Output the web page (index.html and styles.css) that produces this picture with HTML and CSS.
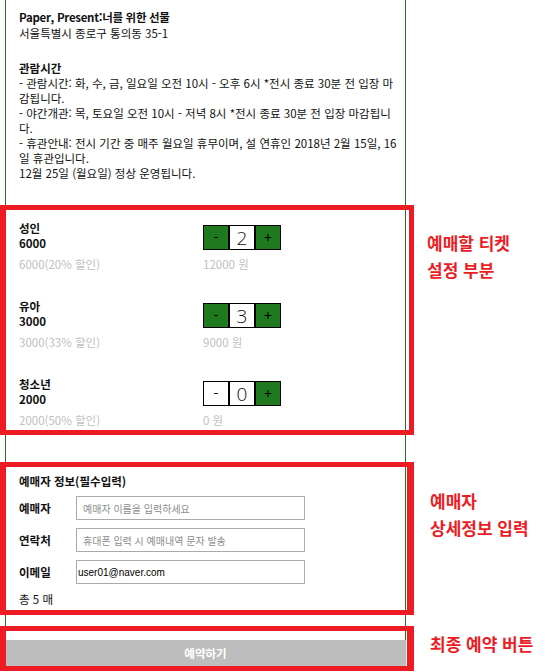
FILE: index.html
```html
<!DOCTYPE html>
<html lang="ko">
<head>
<meta charset="utf-8">
<title>Paper, Present 예매</title>
<link rel="stylesheet" href="styles.css">
</head>
<body>
<div class="page">
  <section class="info">
    <p class="info-title">Paper, Present:너를 위한 선물</p>
    <p class="info-line">서울특별시 종로구 통의동 35-1</p>
    <div class="hours">
      <p class="hours-title">관람시간</p>
      <p>- 관람시간: 화, 수, 금, 일요일 오전 10시 - 오후 6시 *전시 종료 30분 전 입장 마감됩니다.</p>
      <p>- 야간개관: 목, 토요일 오전 10시 - 저녁 8시 *전시 종료 30분 전 입장 마감됩니다.</p>
      <p>- 휴관안내: 전시 기간 중 매주 월요일 휴무이며, 설 연휴인 2018년 2월 15일, 16일 휴관입니다.</p>
      <p>12월 25일 (월요일) 정상 운영됩니다.</p>
    </div>
  </section>

  <section class="tickets">
    <div class="ticket">
      <div class="ticket-name"><strong>성인</strong><strong>6000</strong></div>
      <div class="stepper">
        <button class="step step-on">-</button>
        <input class="step-value" type="text" value="2" readonly>
        <button class="step step-on">+</button>
      </div>
      <div class="ticket-note">6000(20% 할인)</div>
      <div class="ticket-note">12000 원</div>
    </div>
    <div class="ticket">
      <div class="ticket-name"><strong>유아</strong><strong>3000</strong></div>
      <div class="stepper">
        <button class="step step-on">-</button>
        <input class="step-value" type="text" value="3" readonly>
        <button class="step step-on">+</button>
      </div>
      <div class="ticket-note">3000(33% 할인)</div>
      <div class="ticket-note">9000 원</div>
    </div>
    <div class="ticket">
      <div class="ticket-name"><strong>청소년</strong><strong>2000</strong></div>
      <div class="stepper">
        <button class="step">-</button>
        <input class="step-value" type="text" value="0" readonly>
        <button class="step step-on">+</button>
      </div>
      <div class="ticket-note">2000(50% 할인)</div>
      <div class="ticket-note">0 원</div>
    </div>
  </section>

  <section class="buyer">
    <p class="buyer-title">예매자 정보(필수입력)</p>
    <div class="fields">
      <label class="field"><span class="field-label">예매자</span><input class="field-input" type="text" placeholder="예매자 이름을 입력하세요"></label>
      <label class="field"><span class="field-label">연락처</span><input class="field-input" type="text" placeholder="휴대폰 입력 시 예매내역 문자 발송"></label>
      <label class="field"><span class="field-label">이메일</span><input class="field-input field-input-filled" type="text" value="user01@naver.com"></label>
    </div>
    <p class="total">총 5 매</p>
  </section>
</div>
<button class="reserve">예약하기</button>

<div class="mark mark-tickets"></div>
<div class="mark mark-buyer"></div>
<div class="mark mark-button"></div>
<p class="note note-tickets">예매할 티켓<br>설정 부분</p>
<p class="note note-buyer">예매자<br>상세정보 입력</p>
<p class="note note-button">최종 예약 버튼</p>
</body>
</html>
```

FILE: styles.css
```css
* { box-sizing: border-box; }

body {
  margin: 0;
  background: #fff;
  color: #111;
  font-family: "Noto Sans CJK KR", "Noto Sans", sans-serif;
  font-size: 11.5px;
}

p { margin: 0; }

.page {
  width: 401px;
  margin-left: 5px;
  border-left: 1px solid #1f7a1f;
  border-right: 1px solid #1f7a1f;
  padding: 9px 7px 33px 13px;
}

.info { line-height: 16px; }
.info-title {
  font-weight: bold;
  letter-spacing: -0.3px;
}

.hours {
  margin-top: 20px;
  line-height: 15px;
  word-break: break-all;
}
.hours-title { font-weight: bold; }

.tickets {
  margin-top: 40px;
  display: flex;
  flex-direction: column;
  gap: 27px;
}

.ticket {
  display: grid;
  grid-template-columns: 184px auto;
  grid-template-rows: 30px 15px;
  row-gap: 6px;
  line-height: 15px;
}

.ticket-name {
  display: flex;
  flex-direction: column;
}

.ticket-note { color: #c0c0c0; }

.stepper {
  display: flex;
  margin-top: 4px;
  height: 25px;
}

.step,
.step-value {
  width: 26px;
  height: 25px;
  border: 1px solid #000;
  padding: 0;
  margin: 0;
  background: #fff;
  color: #000;
  text-align: center;
  font-family: "Noto Sans CJK KR", sans-serif;
}

.step {
  font-size: 14px;
  line-height: 21px;
}

.step-on { background: #1f7a1f; }

.step-value {
  font-size: 19px;
  font-family: "Open Sans", "Liberation Sans", sans-serif;
  font-weight: 300;
  color: #111;
  outline: none;
}

.buyer { margin-top: 46px; line-height: 15px; }
.buyer-title { font-weight: bold; }

.fields {
  margin-top: 7px;
  display: flex;
  flex-direction: column;
  gap: 8px;
}

.field {
  display: flex;
  align-items: center;
}

.field-label {
  width: 57px;
  font-weight: bold;
}

.field-input {
  width: 229px;
  height: 24px;
  border: 1px solid #a9a9a9;
  padding: 0 6px;
  font-family: "Noto Sans CJK KR", sans-serif;
  font-size: 10px;
  color: #000;
  outline: none;
}
.field-input::placeholder { color: #8d8d8d; }
.field-input-filled {
  padding-left: 1px;
  font-family: "Liberation Sans", sans-serif;
}

.total { margin-top: 8px; }

.reserve {
  display: block;
  width: 401px;
  height: 26px;
  margin: 0 0 0 5px;
  border: none;
  background: #bdbdbd;
  color: #fff;
  font-family: "Noto Sans CJK KR", sans-serif;
  font-size: 11.5px;
  font-weight: bold;
}

.mark {
  position: absolute;
  left: 0;
  width: 414px;
  border: 5px solid #ed1c24;
  border-left-width: 6px;
}
.mark-tickets { top: 205px; height: 230px; }
.mark-buyer { top: 462px; height: 153px; border-right-width: 7px; }
.mark-button { top: 626px; height: 45px; border-right-width: 7px; }

.note {
  position: absolute;
  color: #ed1c24;
  font-size: 17px;
  font-weight: bold;
  line-height: 27px;
}
.note-tickets { left: 427px; top: 229px; }
.note-buyer { left: 430px; top: 487px; }
.note-button { left: 430px; top: 630px; }
```
